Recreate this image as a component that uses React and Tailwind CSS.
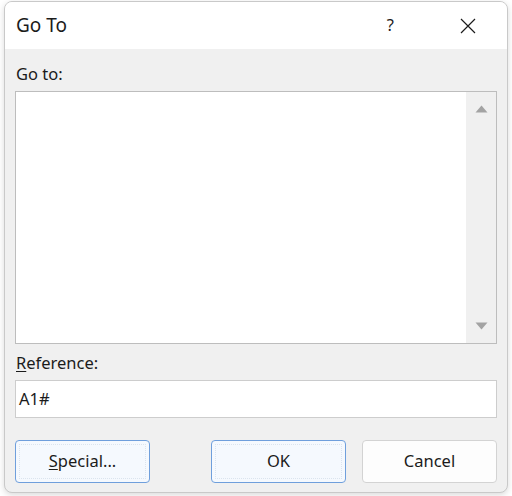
import React from 'react';

const font = { fontFamily: '"Noto Sans", "Open Sans", sans-serif' };

const Triangle = ({ down }) => (
    <svg width="13" height="8" viewBox="0 0 13 8" className="block">
        <path d={down ? 'M0.5 0.5 H12.5 L6.5 7.5 Z' : 'M0.5 7.5 H12.5 L6.5 0.5 Z'} fill="#a3a3a3" />
    </svg>
);

const DialogButton = ({ children, focused, className = '' }) => (
    <button
        type="button"
        className={`h-[43px] w-[135px] rounded-[4px] border text-[16.5px] text-[#1b1b1b] p-[3px] ${
            focused ? 'border-[#6f9fdc] bg-[#f5f9fe]' : 'border-[#d3d3d3] bg-[#fdfdfd]'
        } ${className}`}
    >
        <span
            className={`flex h-full w-full items-center justify-center ${
                focused ? 'border border-dotted border-[#dbe4ee]' : ''
            }`}
        >
            {children}
        </span>
    </button>
);

export default function App() {
    return (
        <div className="w-[512px] h-[496px] bg-white overflow-hidden" style={font}>
            <div className="ml-[4px] mt-[1px] w-[504px] h-[492px] rounded-[8px] border border-[#c9c9c9] bg-[#f0f0f0] overflow-hidden flex flex-col shadow-[0_2px_6px_rgba(0,0,0,0.15)]">
                <div className="h-[47px] bg-white flex items-center pl-[11px] shrink-0">
                    <span className="text-[19px] text-[#1b1b1b] flex-1">Go To</span>
                    <span className="text-[16.5px] text-[#1b1b1b] mr-[66px]">?</span>
                    <svg width="16" height="16" viewBox="0 0 16 16" className="mr-[31px]">
                        <path d="M1 1 L15 15 M15 1 L1 15" stroke="#1b1b1b" strokeWidth="1.2" />
                    </svg>
                </div>

                <div className="flex-1 px-[10px] pt-[15px]">
                    <div className="h-[20px] leading-[20px] text-[16.5px] text-[#1b1b1b] pl-[1px]">Go to:</div>
                    <div className="mt-[7px] h-[253px] border border-[#bdbdbd] bg-white flex">
                        <div className="flex-1" />
                        <div className="w-[30px] bg-[#f0f0f0] flex flex-col items-center justify-between pt-[13px] pb-[13px]">
                            <Triangle />
                            <Triangle down />
                        </div>
                    </div>

                    <div className="mt-[9px] h-[20px] leading-[20px] text-[16.5px] text-[#1b1b1b] pl-[1px]">
                        <span className="underline underline-offset-2">R</span>eference:
                    </div>
                    <div className="mt-[7px] h-[38px] border border-[#cdcdcd] bg-white flex items-center pl-[3px] text-[16.5px] text-[#1b1b1b]">
                        A1#
                    </div>

                    <div className="mt-[22px] flex">
                        <DialogButton focused>
                            <span className="underline underline-offset-2">S</span>pecial...
                        </DialogButton>
                        <DialogButton focused className="ml-[61px]">OK</DialogButton>
                        <DialogButton className="ml-[16px]">Cancel</DialogButton>
                    </div>
                </div>
            </div>
        </div>
    );
}
